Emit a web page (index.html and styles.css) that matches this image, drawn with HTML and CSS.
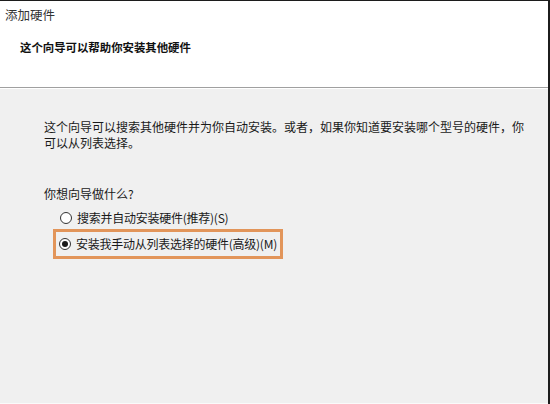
FILE: index.html
```html
<!DOCTYPE html>
<html lang="zh-CN">
<head>
<meta charset="utf-8">
<title>添加硬件</title>
<link rel="stylesheet" href="styles.css">
</head>
<body>
<div class="window">
  <div class="header">
    <div class="title">添加硬件</div>
    <div class="subtitle">这个向导可以帮助你安装其他硬件</div>
  </div>
  <div class="sep"></div>
  <div class="content">
    <p class="intro">这个向导可以搜索其他硬件并为你自动安装。或者，如果你知道要安装哪个型号的硬件，你<br>可以从列表选择。</p>
    <p class="question">你想向导做什么?</p>
    <div class="options">
      <div class="option">
        <span class="radio"></span>
        <span class="label">搜索并自动安装硬件(推荐)(S)</span>
      </div>
      <div class="option option-hl">
        <span class="radio checked"></span>
        <span class="label">安装我手动从列表选择的硬件(高级)(M)</span>
      </div>
    </div>
  </div>
</div>
</body>
</html>
```
FILE: styles.css
```css
html, body {
  margin: 0;
  padding: 0;
  background: #f0f0f0;
}
body {
  font-family: "Noto Sans CJK SC", "Microsoft YaHei", sans-serif;
  font-size: 12px;
  color: #1a1a1a;
}
.window {
  width: 550px;
  height: 404px;
  box-sizing: border-box;
  border-top: 1px solid #1c1c1c;
  border-right: 2px solid #1c1c1c;
  display: flex;
  flex-direction: column;
  overflow: hidden;
}
.header {
  background: #ffffff;
  height: 86px;
  padding: 6px 0 0 5px;
  box-sizing: border-box;
}
.title {
  font-size: 12.5px;
  line-height: 16px;
  color: #333;
}
.subtitle {
  margin-top: 16px;
  padding-left: 15px;
  font-size: 11.4px;
  font-weight: bold;
  line-height: 16px;
  color: #111;
}
.sep {
  border-top: 1px solid #a0a0a0;
  border-bottom: 1px solid #ffffff;
}
.content {
  flex: 1;
  background: #f0f0f0;
  padding: 30px 0 0 44px;
  border-bottom: 1px solid #fafafa;
}
.intro {
  margin: 0;
  line-height: 16px;
  white-space: nowrap;
}
.question {
  margin: 35px 0 0 0;
  line-height: 16px;
}
.options {
  margin-top: 8px;
  margin-left: 9px;
  display: flex;
  flex-direction: column;
}
.option {
  display: flex;
  align-items: center;
  height: 16px;
  line-height: 16px;
  padding-left: 7px;
  width: fit-content;
}
.option-hl {
  margin-top: 3px;
  height: 24px;
  width: 221px;
  border: 3px solid #e2955a;
  padding-left: 3px;
}
.radio {
  width: 10px;
  height: 10px;
  border: 1px solid #333;
  border-radius: 50%;
  background: #fff;
  margin-right: 5px;
  position: relative;
  flex: none;
}
.radio.checked::after {
  content: "";
  position: absolute;
  left: 2px;
  top: 2px;
  width: 6px;
  height: 6px;
  border-radius: 50%;
  background: #1a1a1a;
}
.label {
  white-space: nowrap;
  letter-spacing: -0.25px;
}
```
